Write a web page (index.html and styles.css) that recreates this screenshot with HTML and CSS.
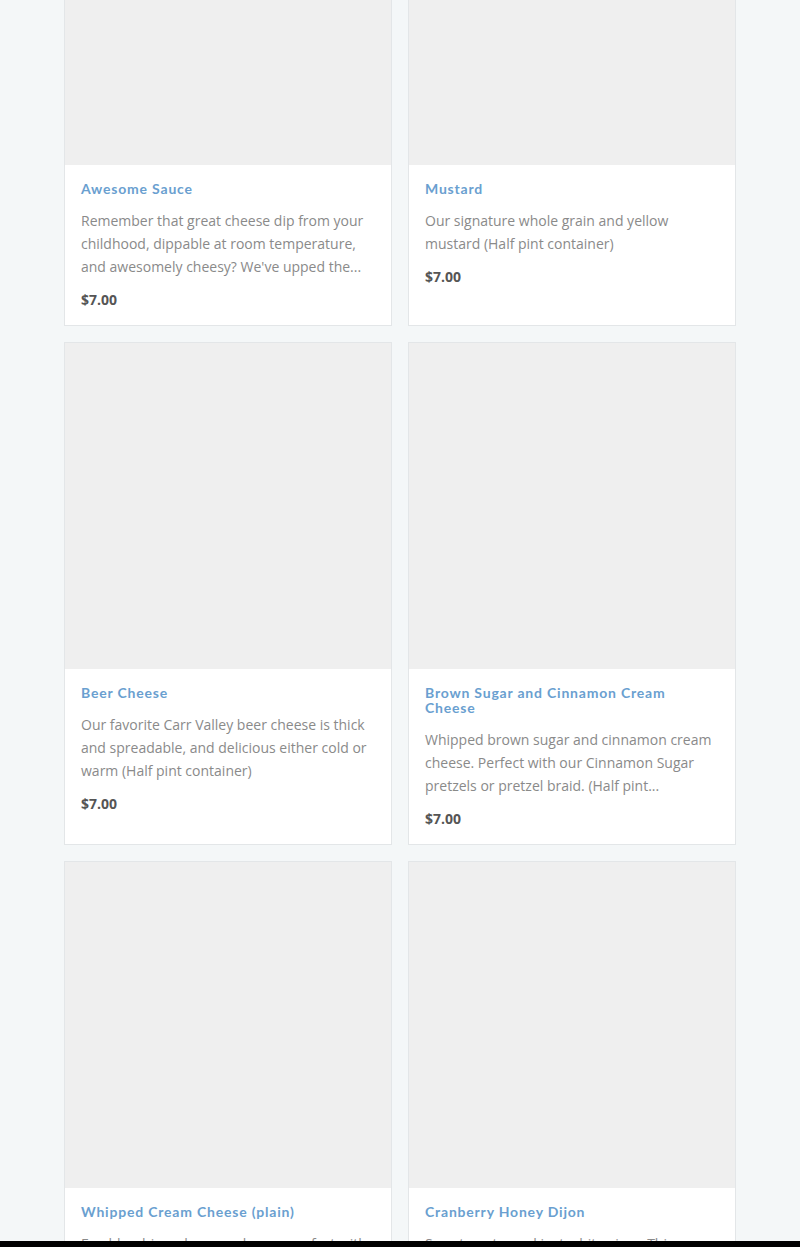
FILE: index.html
```html
<!DOCTYPE html>
<html lang="en">
<head>
<meta charset="utf-8">
<title>Products</title>
<link rel="stylesheet" href="styles.css">
</head>
<body>
<main class="grid">
  <article class="card">
    <div class="thumb"></div>
    <div class="body">
      <h3 class="title">Awesome Sauce</h3>
      <p class="desc">Remember that great cheese dip from your childhood, dippable at room temperature, and awesomely cheesy? We've upped the...</p>
      <div class="price">$7.00</div>
    </div>
  </article>
  <article class="card">
    <div class="thumb"></div>
    <div class="body">
      <h3 class="title">Mustard</h3>
      <p class="desc">Our signature whole grain and yellow mustard (Half pint container)</p>
      <div class="price">$7.00</div>
    </div>
  </article>
  <article class="card">
    <div class="thumb"></div>
    <div class="body">
      <h3 class="title">Beer Cheese</h3>
      <p class="desc">Our favorite Carr Valley beer cheese is thick and spreadable, and delicious either cold or warm (Half pint container)</p>
      <div class="price">$7.00</div>
    </div>
  </article>
  <article class="card">
    <div class="thumb"></div>
    <div class="body">
      <h3 class="title">Brown Sugar and Cinnamon Cream Cheese</h3>
      <p class="desc">Whipped brown sugar and cinnamon cream cheese. Perfect with our Cinnamon Sugar pretzels or pretzel braid. (Half pint...</p>
      <div class="price">$7.00</div>
    </div>
  </article>
  <article class="card">
    <div class="thumb"></div>
    <div class="body">
      <h3 class="title">Whipped Cream Cheese (plain)</h3>
      <p class="desc">Freshly whipped cream cheese, perfect with any of our pretzels. (Half pint container)</p>
      <div class="price">$7.00</div>
    </div>
  </article>
  <article class="card">
    <div class="thumb"></div>
    <div class="body">
      <h3 class="title">Cranberry Honey Dijon</h3>
      <p class="desc">Sweet, zesty, and just a bit spicy... This cranberry honey dijon is a seasonal favorite.</p>
      <div class="price">$7.00</div>
    </div>
  </article>
</main>
<div class="bottom-bar"></div>
</body>
</html>
```

FILE: styles.css
```css
html, body {
  margin: 0;
  padding: 0;
  background: #f4f7f8;
  overflow: hidden;
}

.grid {
  width: 672px;
  margin: -162px auto 0;
  display: grid;
  grid-template-columns: 1fr 1fr;
  gap: 16px;
}

.card {
  background: #fff;
  border: 1px solid #e3e6e8;
  display: flex;
  flex-direction: column;
}

.thumb {
  height: 326px;
  background: #efefef;
}

.body {
  padding: 16px 16px 16px;
}

.title {
  margin: 0;
  font-family: "Lato", "DejaVu Sans", sans-serif;
  font-weight: 700;
  font-size: 14px;
  line-height: 15px;
  letter-spacing: 0.8px;
  color: #6a9fd0;
}

.desc {
  margin: 13px 0 0;
  font-family: "Open Sans", "Liberation Sans", sans-serif;
  font-size: 14px;
  line-height: 23px;
  color: #8a8a8a;
}

.price {
  margin-top: 13px;
  font-family: "Open Sans", "Liberation Sans", sans-serif;
  font-weight: 700;
  font-size: 14px;
  line-height: 18px;
  color: #555;
}

.bottom-bar {
  position: fixed;
  left: 0;
  right: 0;
  bottom: 0;
  height: 6px;
  background: #000;
}
```
